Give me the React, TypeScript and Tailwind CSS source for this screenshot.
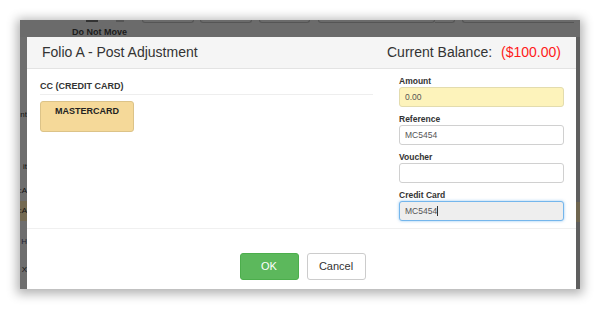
import React from "react";

const font = { fontFamily: '"Liberation Sans", Arial, sans-serif' };

function Field({ label, value, variant }: { label: string; value?: string; variant?: "yellow" | "focus" }) {
  const base = "h-[20px] w-full rounded-[3px] border px-[5px] flex items-center text-[8.5px] text-[#555]";
  const cls =
    variant === "yellow"
      ? "bg-[#fdf3bb] border-[#e3dcae]"
      : variant === "focus"
      ? "bg-[#eeeeee] border-[#74b6ec] shadow-[0_0_3px_rgba(102,175,233,0.7)]"
      : "bg-white border-[#d0d0d0]";
  return (
    <div className="flex flex-col">
      <div className="h-[11px] leading-[10px] text-[8.5px] font-bold text-[#333]">{label}</div>
      <div className={`${base} ${cls}`}>
        <span>{value}</span>
        {variant === "focus" && <span className="w-px h-[10px] bg-[#333]" />}
      </div>
    </div>
  );
}

export default function App() {
  return (
    <div className="w-[600px] h-[310px] bg-white overflow-hidden" style={font}>
      <div className="ml-[20px] mt-[20px] w-[560px] h-[269px] bg-[#6b6b6b] shadow-[0_2px_10px_3px_rgba(0,0,0,0.3)] flex flex-col overflow-hidden">
        {/* background page top strip */}
        <div className="h-[17px] flex items-start relative shrink-0">
          <div className="flex gap-[6px] items-start h-[3px] ml-[66px]">
            <div className="w-[12px] h-[2px] bg-[#333]" />
          </div>
          <div className="ml-[18px] w-[8px] h-[2px] bg-[#555]" />
          <div className="ml-[18px] w-[52px] h-[3px] border-b border-x border-[#555] rounded-b-[3px]" />
          <div className="ml-[6px] w-[52px] h-[3px] border-b border-x border-[#555] rounded-b-[3px]" />
          <div className="ml-[7px] w-[51px] h-[3px] border-b border-x border-[#555] rounded-b-[3px]" />
          <div className="ml-[8px] w-[117px] h-[3px] border-b border-x border-[#555] rounded-b-[3px]" />
          <div className="w-[20px] h-[3px] border-b border-r border-[#555] rounded-br-[3px]" />
          <div className="ml-[7px] w-[112px] h-[3px] border-b border-l border-[#555] rounded-bl-[3px]" />
          <div className="absolute left-[52px] top-[7px] text-[9px] font-bold text-[#1c1c1c] leading-[10px]">Do Not Move</div>
        </div>
        <div className="flex flex-1">
          {/* left strip */}
          <div className="w-[7px] shrink-0 flex flex-col items-end overflow-hidden text-[8px] text-[#111] bg-[#6e6e6e]">
            <div className="h-[73px]" />
            <div className="leading-[10px]">nt</div>
            <div className="h-[42px]" />
            <div className="leading-[10px]">it</div>
            <div className="h-[14px]" />
            <div className="leading-[10px]">:A</div>
            <div className="h-[5px]" />
            <div className="w-full h-[20px] bg-[#746a52] flex items-center justify-end leading-[10px]">:A</div>
            <div className="h-[16px]" />
            <div className="leading-[10px] text-[#223]">H</div>
            <div className="h-[18px]" />
            <div className="leading-[10px]">X</div>
          </div>
          {/* modal */}
          <div className="w-[549px] h-[252px] bg-white flex flex-col shrink-0">
            <div className="h-[32px] bg-[#f5f5f5] border-b border-[#e3e3e3] flex items-center justify-between pl-[15px] pr-[15px] shrink-0">
              <div className="text-[14px] text-[#333]">Folio A - Post Adjustment</div>
              <div className="text-[14px] text-[#333]">
                Current Balance:<span className="ml-[9px] text-[#ff1a1a]">($100.00)</span>
              </div>
            </div>
            <div className="flex pl-[13px] pr-[12px] pt-[7px] pb-[7px] border-b border-[#f0f0f0]">
              <div className="w-[333px] pt-[5px]">
                <div className="text-[9px] font-bold text-[#333] leading-[10px] pb-[3px] border-b border-[#eeeeee]">CC (CREDIT CARD)</div>
                <div className="mt-[6px] w-[94px] h-[31px] rounded-[3px] bg-[#f5d999] border border-[#dcc388] flex justify-center pt-[4px] text-[9px] font-bold text-[#222] leading-[10px]">
                  MASTERCARD
                </div>
              </div>
              <div className="ml-[26px] w-[165px] flex flex-col gap-[7px]">
                <Field label="Amount" value="0.00" variant="yellow" />
                <Field label="Reference" value="MC5454" />
                <Field label="Voucher" value="" />
                <Field label="Credit Card" value="MC5454" variant="focus" />
              </div>
            </div>
            <div className="flex justify-center gap-[8px] pt-[24px] pl-[2px]">
              <div className="w-[59px] h-[27px] rounded-[3px] bg-[#5cb85c] border border-[#4cae4c] flex items-center justify-center text-[11px] text-white">OK</div>
              <div className="w-[59px] h-[27px] rounded-[3px] bg-white border border-[#cccccc] flex items-center justify-center text-[11px] text-[#333]">Cancel</div>
            </div>
          </div>
          {/* right strip */}
          <div className="flex-1 bg-[#5e5e5e] flex flex-col overflow-hidden text-[8px] text-[#111]">
            <div className="h-[165px]" />
            <div className="w-full h-[20px] bg-[#6f6650]" />
          </div>
        </div>
      </div>
    </div>
  );
}
